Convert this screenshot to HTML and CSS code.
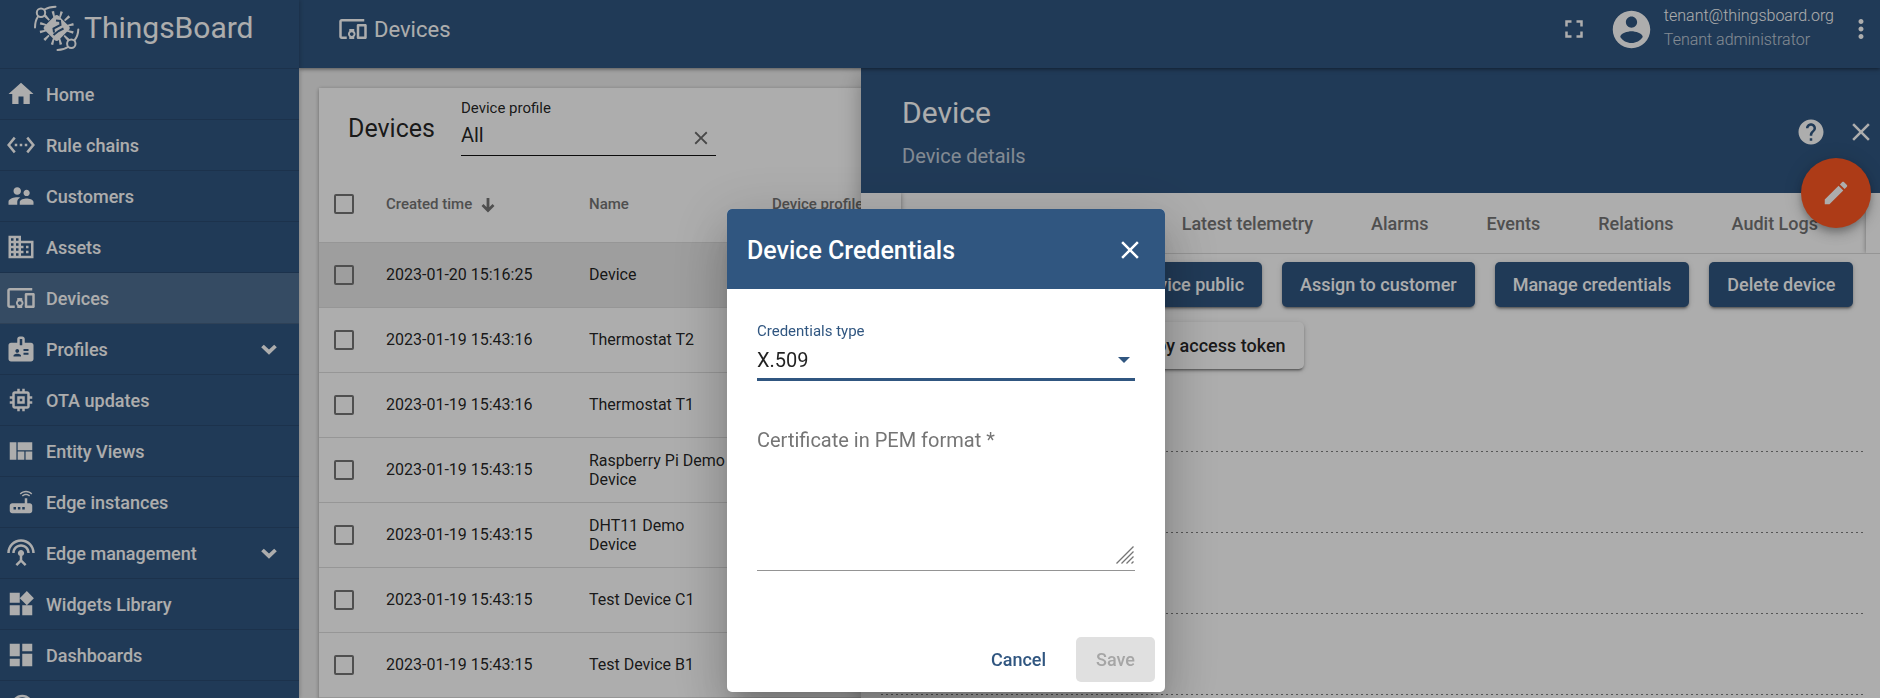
FILE: index.html
```html
<!DOCTYPE html>
<html lang="en">
<head>
<meta charset="utf-8">
<title>ThingsBoard | Devices</title>
<meta name="viewport" content="width=device-width, initial-scale=1">
<link rel="stylesheet" href="styles.css">
</head>
<body>
<svg class="sprite" aria-hidden="true">
  <symbol id="i-close" viewBox="0 0 24 24"><path d="M19 6.41L17.59 5 12 10.59 6.41 5 5 6.41 10.59 12 5 17.59 6.41 19 12 13.41 17.59 19 19 17.59 13.41 12z"/></symbol>
  <symbol id="i-devices" viewBox="0 0 24 24"><path d="M3 6h18V4H3c-1.1 0-2 .9-2 2v12c0 1.1.9 2 2 2h4v-2H3V6zm10 6H9v1.78c-.61.55-1 1.33-1 2.22s.39 1.67 1 2.22V20h4v-1.78c.61-.55 1-1.34 1-2.22s-.39-1.67-1-2.22V12zm-2 5.5c-.83 0-1.5-.67-1.5-1.5s.67-1.5 1.5-1.5 1.5.67 1.5 1.5-.67 1.5-1.5 1.5zM22 8h-6c-.5 0-1 .5-1 1v10c0 .5.5 1 1 1h6c.5 0 1-.5 1-1V9c0-.5-.5-1-1-1zm-1 10h-4v-8h4v8z"/></symbol>
  <symbol id="i-chevron" viewBox="0 0 24 24"><path d="M5.5 9l6.5 6.2L18.500 9" fill="none" stroke="currentColor" stroke-width="3.800"/></symbol>
  <symbol id="i-copy" viewBox="0 0 24 24"><path d="M16 1H4c-1.100 0-2 .9-2 2v14h2V3h12V1zm3 4H8c-1.100 0-2 .9-2 2v14c0 1.100.9 2 2 2h11c1.100 0 2-.9 2-2V7c0-1.100-.9-2-2-2zm0 16H8V7h11v14z"/></symbol>
</svg>

<div class="app">
  <aside class="sidebar">
    <a class="brand" href="#">
      <svg class="brand-mark" viewBox="0 0 48 48" aria-hidden="true">
        <g fill="none" stroke="currentColor" stroke-width="2" stroke-linecap="round">
          <circle cx="8" cy="9.700" r="4.200"/><path d="M11.500 6.500Q16 3.700 22.500 3.700"/><path d="M5 13.500Q2 18 2 24.500"/>
          <circle cx="38.300" cy="40.700" r="4.200"/><path d="M41.700 37Q45 33 45.300 26.500"/><path d="M35 44Q31 46.800 24.500 47"/>
        </g>
        <circle cx="23.700" cy="25" r="14" fill="none" stroke="currentColor" stroke-width="6.500" stroke-dasharray="2.100 5.230" transform="rotate(11 23.700 25)"/>
        <rect x="13.700" y="15" width="20" height="20" rx="3" fill="currentColor" transform="rotate(45 23.700 25)"/>
        <path class="bolt" d="M23 17.500l4 .5.500 4-7 3.500.5 4M20.500 32l5-4 5-2.500"/>
      </svg>
      <span>ThingsBoard</span>
    </a>
    <nav class="menu">
      <a href="#"><svg class="icon" viewBox="0 0 24 24"><path d="M10 20v-6h4v6h5v-8h3L12 3 2 12h3v8z"/></svg><span>Home</span></a>
      <a href="#"><svg class="icon" viewBox="0 0 24 24"><path d="M7.77 6.76L6.23 5.48.82 12l5.41 6.52 1.54-1.28L3.42 12l4.35-5.24zM7 13h2v-2H7v2zm10-2h-2v2h2v-2zm-6 2h2v-2h-2v2zm6.770-7.520l-1.540 1.280L20.580 12l-4.350 5.240 1.540 1.280L23.180 12l-5.410-6.520z"/></svg><span>Rule chains</span></a>
      <a href="#"><svg class="icon" viewBox="0 0 24 24"><path d="M16.5 12c1.38 0 2.49-1.12 2.49-2.5S17.88 7 16.5 7 14 8.12 14 9.5s1.12 2.5 2.5 2.500zM9 11c1.66 0 2.99-1.34 2.99-3S10.66 5 9 5 6 6.34 6 8s1.34 3 3 3zm7.500 3c-1.830 0-5.500.92-5.500 2.750V19h11v-2.250c0-1.830-3.670-2.750-5.500-2.750zM9 13c-2.330 0-7 1.170-7 3.500V19h7v-2.250c0-.85.33-2.340 2.370-3.470C10.500 13.100 9.660 13 9 13z"/></svg><span>Customers</span></a>
      <a href="#"><svg class="icon" viewBox="0 0 24 24"><path d="M12 7V3H2v18h20V7H12zM6 19H4v-2h2v2zm0-4H4v-2h2v2zm0-4H4V9h2v2zm0-4H4V5h2v2zm4 12H8v-2h2v2zm0-4H8v-2h2v2zm0-4H8V9h2v2zm0-4H8V5h2v2zm10 12h-8v-2h2v-2h-2v-2h2v-2h-2V9h8v10zm-2-8h-2v2h2v-2zm0 4h-2v2h2v-2z"/></svg><span>Assets</span></a>
      <a href="#" class="active" aria-current="page"><svg class="icon"><use href="#i-devices"/></svg><span>Devices</span></a>
      <a href="#"><svg class="icon" viewBox="0 0 24 24"><path d="M20 7h-5V4c0-1.1-.9-2-2-2h-2c-1.1 0-2 .9-2 2v3H4c-1.1 0-2 .9-2 2v11c0 1.1.9 2 2 2h16c1.1 0 2-.9 2-2V9c0-1.1-.9-2-2-2zM9 12c.83 0 1.5.67 1.5 1.5S9.83 15 9 15s-1.500-.67-1.500-1.500S8.170 12 9 12zm3 6H6v-.75c0-1 2-1.500 3-1.500s3 .5 3 1.500V18zm1-9h-2V4h2v5zm5 7.500h-4V15h4v1.500zm0-3h-4V12h4v1.500z"/></svg><span>Profiles</span><svg class="chevron"><use href="#i-chevron"/></svg></a>
      <a href="#"><svg class="icon" viewBox="0 0 24 24"><path d="M15 9H9v6h6V9zm-2 4h-2v-2h2v2zm8-2V9h-2V7c0-1.1-.9-2-2-2h-2V3h-2v2h-2V3H9v2H7c-1.1 0-2 .9-2 2v2H3v2h2v2H3v2h2v2c0 1.1.9 2 2 2h2v2h2v-2h2v2h2v-2h2c1.1 0 2-.9 2-2v-2h2v-2h-2v-2h2zm-4 6H7V7h10v10z"/></svg><span>OTA updates</span></a>
      <a href="#"><svg class="icon" viewBox="0 0 24 24"><path d="M21 5v6.33H9.33V5H21zm-6.330 14v-6.670H9.330V19h5.340zm1-6.670V19H21v-6.670h-5.330zM8.330 19V5H3v14h5.330z"/></svg><span>Entity Views</span></a>
      <a href="#"><svg class="icon" viewBox="0 0 24 24"><path d="M20.2 5.9l.8-.8C19.6 3.7 17.8 3 16 3s-3.6.7-5 2.1l.8.8C13 4.8 14.5 4.2 16 4.200s3 .6 4.200 1.700zm-.9.8c-.9-.9-2.100-1.400-3.300-1.400s-2.400.5-3.300 1.400l.8.8c.7-.7 1.600-1 2.500-1 .9 0 1.800.3 2.500 1l.8-.8zM19 13h-2V9h-2v4H5c-1.100 0-2 .9-2 2v4c0 1.100.9 2 2 2h14c1.100 0 2-.9 2-2v-4c0-1.100-.9-2-2-2zM8 18H6v-2h2v2zm3.500 0h-2v-2h2v2zm3.500 0h-2v-2h2v2z"/></svg><span>Edge instances</span></a>
      <a href="#"><svg class="icon" viewBox="0 0 24 24"><path d="M12 5c-3.87 0-7 3.13-7 7h2c0-2.76 2.24-5 5-5s5 2.24 5 5h2c0-3.870-3.130-7-7-7zm1 9.290c.88-.39 1.500-1.260 1.500-2.290 0-1.380-1.120-2.500-2.500-2.500S9.500 10.620 9.500 12c0 1.020.62 1.900 1.500 2.290v3.300L7.590 21 9 22.410l3-3 3 3L16.410 21 13 17.590v-3.300zM12 1C5.930 1 1 5.930 1 12h2c0-4.970 4.030-9 9-9s9 4.030 9 9h2c0-6.070-4.930-11-11-11z"/></svg><span>Edge management</span><svg class="chevron"><use href="#i-chevron"/></svg></a>
      <a href="#"><svg class="icon" viewBox="0 0 24 24"><path d="M13 13v8h8v-8h-8zM3 21h8v-8H3v8zM3 3v8h8V3H3zm13.660-1.310L11 7.340 16.660 13l5.660-5.660-5.660-5.650z"/></svg><span>Widgets Library</span></a>
      <a href="#"><svg class="icon" viewBox="0 0 24 24"><path d="M3 13h8V3H3v10zm0 8h8v-6H3v6zm10 0h8V11h-8v10zm0-18v6h8V3h-8z"/></svg><span>Dashboards</span></a>
      <a href="#" aria-label="Version control"><svg class="icon" viewBox="0 0 24 24"><path d="M13 3c-4.970 0-9 4.030-9 9H1l3.890 3.890.07.14L9 12H6c0-3.870 3.130-7 7-7s7 3.130 7 7-3.130 7-7 7c-1.930 0-3.680-.79-4.940-2.060l-1.420 1.420C8.270 19.990 10.510 21 13 21c4.970 0 9-4.030 9-9s-4.030-9-9-9zm-1 5v5l4.280 2.540.72-1.210-3.500-2.080V8H12z"/></svg></a>
    </nav>
  </aside>

  <div class="page">
    <header class="toolbar">
      <svg class="icon"><use href="#i-devices"/></svg>
      <h1>Devices</h1>
      <button class="icon-button fullscreen" aria-label="Fullscreen"><svg class="icon" viewBox="0 0 24 24"><path d="M7 14H5v5h5v-2H7v-3zm-2-4h2V7h3V5H5v5zm12 7h-3v2h5v-5h-2v3zM14 5v2h3v3h2V5h-5z"/></svg></button>
      <svg class="avatar" viewBox="0 0 24 24"><path d="M12 2C6.48 2 2 6.48 2 12s4.48 10 10 10 10-4.480 10-10S17.520 2 12 2zm0 3c1.660 0 3 1.340 3 3s-1.340 3-3 3-3-1.340-3-3 1.340-3 3-3zm0 14.200c-2.500 0-4.710-1.280-6-3.220.03-1.990 4-3.080 6-3.080 1.990 0 5.970 1.090 6 3.080-1.290 1.940-3.500 3.220-6 3.220z"/></svg>
      <div class="user"><span>tenant@thingsboard.org</span><span class="role">Tenant administrator</span></div>
      <button class="icon-button" aria-label="User menu"><svg class="icon" viewBox="0 0 24 24"><path d="M12 8c1.100 0 2-.9 2-2s-.9-2-2-2-2 .9-2 2 .9 2 2 2zm0 2c-1.100 0-2 .9-2 2s.9 2 2 2 2-.9 2-2-.9-2-2-2zm0 6c-1.100 0-2 .9-2 2s.9 2 2 2 2-.9 2-2-.9-2-2-2z"/></svg></button>
    </header>

    <main class="content">
      <section class="card">
        <div class="card-head">
          <h2>Devices</h2>
          <div class="filter">
            <label for="profile">Device profile</label>
            <div class="filter-row">
              <input id="profile" type="text" value="All">
              <button class="icon-button" aria-label="Clear"><svg class="icon-small"><use href="#i-close"/></svg></button>
            </div>
          </div>
        </div>
        <table class="devices">
          <thead><tr>
            <th class="check"><input type="checkbox" aria-label="Select all"></th>
            <th class="time">Created time<svg class="sort" viewBox="0 0 14 16" aria-hidden="true"><path d="M7 1v12M1.500 8L7 13.500 12.500 8" fill="none" stroke="currentColor" stroke-width="2.800"/></svg></th>
            <th class="name">Name</th>
            <th>Device profile</th>
          </tr></thead>
          <tbody>
            <tr class="current"><td><input type="checkbox" aria-label="Select Device"></td><td>2023-01-20 15:16:25</td><td>Device</td><td></td></tr>
            <tr><td><input type="checkbox" aria-label="Select Thermostat T2"></td><td>2023-01-19 15:43:16</td><td>Thermostat T2</td><td></td></tr>
            <tr><td><input type="checkbox" aria-label="Select Thermostat T1"></td><td>2023-01-19 15:43:16</td><td>Thermostat T1</td><td></td></tr>
            <tr><td><input type="checkbox" aria-label="Select Raspberry Pi Demo Device"></td><td>2023-01-19 15:43:15</td><td>Raspberry Pi Demo Device</td><td></td></tr>
            <tr><td><input type="checkbox" aria-label="Select DHT11 Demo Device"></td><td>2023-01-19 15:43:15</td><td>DHT11 Demo<br>Device</td><td></td></tr>
            <tr><td><input type="checkbox" aria-label="Select Test Device C1"></td><td>2023-01-19 15:43:15</td><td>Test Device C1</td><td></td></tr>
            <tr><td><input type="checkbox" aria-label="Select Test Device B1"></td><td>2023-01-19 15:43:15</td><td>Test Device B1</td><td></td></tr>
          </tbody>
        </table>
      </section>

      <section class="drawer">
        <header class="drawer-head">
          <div class="drawer-title"><h2>Device</h2><p>Device details</p></div>
          <button class="icon-button" aria-label="Help"><svg class="icon" viewBox="0 0 24 24"><path d="M12 2C6.480 2 2 6.480 2 12s4.480 10 10 10 10-4.480 10-10S17.520 2 12 2zm1 17h-2v-2h2v2zm2.070-7.750l-.9.92C13.450 12.900 13 13.500 13 15h-2v-.5c0-1.100.45-2.100 1.170-2.830l1.240-1.260c.37-.36.59-.86.59-1.410 0-1.100-.9-2-2-2s-2 .9-2 2H8c0-2.210 1.790-4 4-4s4 1.790 4 4c0 .88-.36 1.680-.93 2.250z"/></svg></button>
          <button class="icon-button" aria-label="Close details"><svg class="icon"><use href="#i-close"/></svg></button>
          <button class="fab" aria-label="Edit"><svg class="icon" viewBox="0 0 24 24"><path d="M3 17.250V21h3.750L17.810 9.940l-3.750-3.750L3 17.250zM20.710 7.040c.39-.39.39-1.020 0-1.410l-2.340-2.340c-.39-.39-1.020-.39-1.410 0l-1.830 1.830 3.750 3.750 1.830-1.830z"/></svg></button>
        </header>
        <div class="tabs">
          <span class="pager"></span>
          <div class="tab-list">
            <button>Latest telemetry</button><button>Alarms</button><button>Events</button><button>Relations</button><button>Audit Logs</button>
          </div>
          <span class="pager pager-right"></span>
        </div>
        <div class="actions">
          <button class="raised primary">Open details page</button>
          <button class="raised primary">Make device public</button>
          <button class="raised primary">Assign to customer</button>
          <button class="raised primary">Manage credentials</button>
          <button class="raised primary">Delete device</button>
          <button class="raised with-icon"><svg class="icon"><use href="#i-copy"/></svg>Copy device Id</button>
          <button class="raised with-icon"><svg class="icon"><use href="#i-copy"/></svg>Copy access token</button>
        </div>
        <div class="fields"><div></div><div></div><div></div><div></div></div>
      </section>
    </main>
  </div>
</div>

<div class="backdrop">
  <form class="dialog" role="dialog" aria-labelledby="dialog-title">
    <header class="dialog-head">
      <h2 id="dialog-title">Device Credentials</h2>
      <button type="button" class="icon-button" aria-label="Close"><svg class="icon"><use href="#i-close"/></svg></button>
    </header>
    <div class="dialog-body">
      <label class="float-label" for="cred-type">Credentials type</label>
      <div class="select-row">
        <select id="cred-type"><option>X.509</option><option>Access token</option><option>MQTT Basic</option></select>
      </div>
      <div class="area">
        <label for="pem">Certificate in PEM format *</label>
        <textarea id="pem"></textarea>
        <svg class="grip" viewBox="0 0 18 18" aria-hidden="true"><path d="M0.500 17.500l17-17M5.500 17.500l12-12M10.500 17.500l7-7M15.500 17.500l2-2" stroke="currentColor" stroke-width="1.300" fill="none"/></svg>
      </div>
    </div>
    <footer class="dialog-foot">
      <button type="button" class="text-button">Cancel</button>
      <button type="submit" class="text-button save" disabled>Save</button>
    </footer>
  </form>
</div>
</body>
</html>
```
FILE: styles.css
```css
* { box-sizing: border-box; }
html, body { height: 100%; margin: 0; }
body { overflow: hidden; font-family: Roboto, "Liberation Sans", sans-serif; font-size: 16px; color: rgba(0, 0, 0, .87); }
h1, h2, p { margin: 0; font-weight: 400; }
button, input, select, textarea { font: inherit; color: inherit; border: 0; padding: 0; background: none; outline: 0; }
svg { fill: currentColor; flex: none; display: block; }
.sprite { display: none; }
.icon { width: 30px; height: 30px; }
.icon-small { width: 22px; height: 22px; }
.icon-button { display: grid; place-items: center; }

.app { display: flex; height: 100vh; overflow: hidden; }

.sidebar { flex: none; width: 299px; background: #305680; color: #fff; overflow: hidden; box-shadow: 1px 0 4px rgba(0, 0, 0, .2); z-index: 3; }
.brand { display: flex; align-items: center; gap: 3px; height: 69px; padding: 0 0 14px 33px; color: #fff; font-size: 30px; text-decoration: none; border-bottom: 1px solid rgba(0, 0, 0, .12); }
.brand-mark { width: 48px; height: 48px; }
.brand-mark .bolt { fill: none; stroke: #305680; stroke-width: 2; }
.menu a { display: flex; align-items: center; gap: 10px; height: 51px; padding: 0 18px 0 6px; color: #fff; font-size: 18px; font-weight: 500; text-decoration: none; border-bottom: 1px solid rgba(0, 0, 0, .12); }
.menu .active { background: rgba(255, 255, 255, .15); }
.chevron { width: 24px; height: 24px; margin-left: auto; }

.page { flex: 1; min-width: 0; display: flex; flex-direction: column; }
.toolbar { display: flex; align-items: center; height: 68px; padding: 0 4px 10px 39px; background: #305680; color: #fff; box-shadow: 0 1px 4px rgba(0, 0, 0, .5); z-index: 2; }
.toolbar h1 { margin-left: 6px; font-size: 22px; }
.fullscreen { margin-left: auto; }
.avatar { width: 45px; height: 45px; margin-left: 20px; }
.user { display: flex; flex-direction: column; margin: 0 12px 0 10px; padding-bottom: 2px; font-size: 16px; font-weight: 300; line-height: 24px; }
.role { opacity: .7; }

.content { flex: 1; min-height: 0; position: relative; overflow: hidden; background: #eee; padding: 20px; }
.card { height: 100%; min-height: 720px; background: #fff; box-shadow: 0 1px 4px rgba(0, 0, 0, .35); }
.card-head { display: flex; height: 79px; padding-left: 29px; gap: 26px; }
.card-head h2 { font-size: 25px; line-height: 82px; }
.filter { width: 255px; height: 68px; border-bottom: 1px solid #111; padding-top: 11px; }
.filter label { display: block; font-size: 15px; line-height: 18px; }
.filter-row { display: flex; }
.filter input { flex: 1; min-width: 0; height: 36px; font-size: 20px; }
.filter .icon-button { width: 30px; height: 38px; padding-top: 4px; color: #6a6a6a; }

.devices { width: 100%; border-collapse: collapse; table-layout: fixed; }
.devices th, .devices td { text-align: left; padding: 0; border-bottom: 1px solid #dedede; line-height: 19px; }
.devices th { height: 75px; font-size: 15px; font-weight: 500; color: #757575; }
.devices td { height: 65px; white-space: nowrap; }
.devices td:nth-child(3) { padding-right: 30px; white-space: normal; }
.devices .check { width: 67px; }
.devices .time { width: 203px; }
.devices .name { width: 183px; }
.devices .current { background: #e9e9e9; }
.devices input { appearance: none; display: block; width: 20px; height: 20px; margin: 0 0 0 15px; border: 2px solid #757575; border-radius: 2px; }
.sort { display: inline-block; width: 14px; height: 16px; margin-left: 9px; vertical-align: -4px; }

.drawer { position: absolute; top: 0; right: 0; bottom: 0; width: 64.45%; background: #fff; box-shadow: 0 8px 20px rgba(0, 0, 0, .3); }
.drawer-head { position: relative; display: flex; align-items: center; gap: 20px; height: 125px; padding: 2px 4px 0 41px; background: #305680; color: #fff; }
.drawer-title { flex: 1; }
.drawer-title h2 { font-size: 30px; line-height: 48px; }
.drawer-title p { font-size: 20px; line-height: 38px; opacity: .7; }
.fab { position: absolute; right: 9px; bottom: -35px; width: 70px; height: 70px; display: grid; place-items: center; border-radius: 50%; background: #ff5722; color: #fff; box-shadow: 0 4px 6px -1px rgba(0, 0, 0, .2), 0 7px 12px rgba(0, 0, 0, .14), 0 1px 20px rgba(0, 0, 0, .12); }
.tabs { display: flex; height: 61px; border-bottom: 1px solid #dcdcdc; overflow: hidden; }
.pager { flex: none; width: 40px; box-shadow: 0 0 5px rgba(0, 0, 0, .4); }
.pager-right { width: 14px; }
.tab-list { flex: 1; display: flex; justify-content: flex-end; padding-right: 19px; overflow: hidden; }
.tab-list button { padding: 0 29px; font-size: 18px; font-weight: 500; color: #757575; white-space: nowrap; }
.actions { display: flex; flex-wrap: wrap; gap: 15px 20px; padding: 8px 10px 0; }
.raised { display: flex; align-items: center; height: 45px; padding: 0 18px; border-radius: 5px; font-size: 18px; font-weight: 500; white-space: nowrap; box-shadow: 0 3px 2px -2px rgba(0, 0, 0, .3), 0 2px 3px rgba(0, 0, 0, .24), 0 1px 6px rgba(0, 0, 0, .12); }
.raised.primary { background: #305680; color: #fff; }
.raised.with-icon { gap: 6px; height: 47px; }
.fields { padding: 2px 17px 0 20px; }
.fields div { height: 81px; background: repeating-linear-gradient(90deg, rgba(0, 0, 0, .5) 0 2px, transparent 2px 5px) bottom / 100% 1px no-repeat; }

.backdrop { position: fixed; inset: 0; z-index: 10; display: flex; justify-content: center; align-items: flex-start; padding: 209px 0 0 12px; background: rgba(0, 0, 0, .32); }
.dialog { width: 438px; background: #fff; border-radius: 5px; overflow: hidden; box-shadow: 0 14px 19px -9px rgba(0, 0, 0, .2), 0 30px 48px 4px rgba(0, 0, 0, .14), 0 11px 58px 10px rgba(0, 0, 0, .12); }
.dialog-head { display: flex; align-items: center; justify-content: space-between; height: 80px; padding: 2px 20px 0; background: #305680; color: #fff; }
.dialog-head h2 { font-size: 25px; font-weight: 500; }
.dialog-body { padding: 30px 30px 0; }
.float-label { display: block; font-size: 15px; line-height: 24px; color: #305680; }
.select-row { position: relative; height: 38px; border-bottom: 3px solid #305680; }
.select-row::after { content: ""; position: absolute; right: 5px; top: 14px; border: 6px solid transparent; border-top-color: #305680; border-bottom: 0; pointer-events: none; }
.select-row select { appearance: none; width: 100%; height: 34px; font-size: 20px; }
.area { position: relative; height: 190px; padding-top: 45px; border-bottom: 1px solid #949494; }
.area label { position: absolute; top: 46px; left: 0; font-size: 20px; line-height: 26px; color: #757575; }
.area textarea { display: block; width: 100%; height: 140px; font-size: 20px; resize: none; }
.grip { position: absolute; right: 1px; bottom: 6px; width: 18px; height: 18px; color: #757575; }
.dialog-foot { display: flex; justify-content: flex-end; gap: 10px; padding: 66px 10px 10px; }
.text-button { height: 45px; padding: 0 20px; border-radius: 5px; font-size: 18px; font-weight: 500; color: #305680; }
.text-button.save { background: #e0e0e0; color: #a6a6a6; }
```
